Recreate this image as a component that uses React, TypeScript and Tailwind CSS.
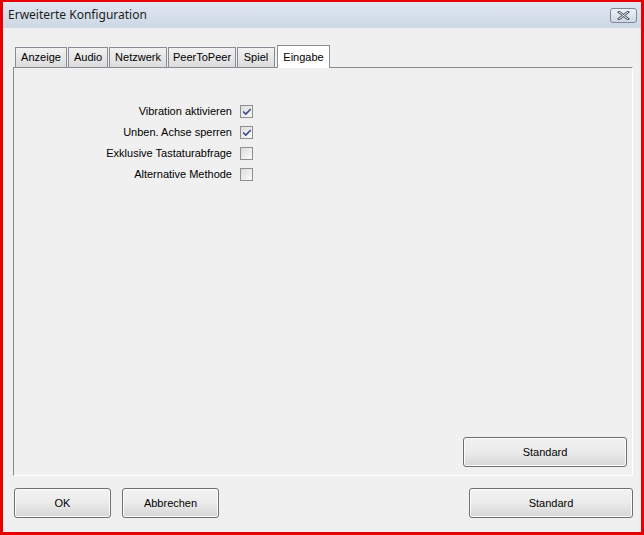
import { Check } from 'lucide-react';

const tabs = [
  { name: 'Anzeige', w: 'w-[52px]' },
  { name: 'Audio', w: 'w-[40px]' },
  { name: 'Netzwerk', w: 'w-[58px]' },
  { name: 'PeerToPeer', w: 'w-[68px]' },
  { name: 'Spiel', w: 'w-[38px]' },
  { name: 'Eingabe', w: 'w-[53px]' },
];

const options = [
  { label: 'Vibration aktivieren', checked: true },
  { label: 'Unben. Achse sperren', checked: true },
  { label: 'Exklusive Tastaturabfrage', checked: false },
  { label: 'Alternative Methode', checked: false },
];

function WinButton({ label, className }: { label: string; className: string }) {
  return (
    <button
      className={`h-[30px] rounded-[3px] border border-[#707070] bg-gradient-to-b from-[#f2f2f2] via-[#ebebeb] to-[#d6d6d6] text-[11px] text-black shadow-[inset_0_0_0_1px_#fcfcfc] ${className}`}
    >
      {label}
    </button>
  );
}

function Checkbox({ checked }: { checked: boolean }) {
  return (
    <div className="flex h-[13px] w-[13px] items-center justify-center border border-[#8e8f8f] bg-gradient-to-br from-[#dcdcdc] to-[#fbfbfb]">
      {checked && <Check className="h-[10px] w-[10px] text-[#3d4f8a]" strokeWidth={4} />}
    </div>
  );
}

export default function App() {
  return (
    <div
      className="h-[535px] w-[644px] overflow-hidden border-x-[3px] border-b-[3px] border-t-2 border-[#e60000] bg-[#f0f0f0]"
      style={{ fontFamily: '"Liberation Sans", Arial, sans-serif' }}
    >
      <div className="flex h-[26px] items-center justify-between bg-gradient-to-b from-[#dfe7f0] to-[#cdd8e5] pl-[5px] pr-[4px]">
        <span className="text-[12px] text-[#1e1e1e]" style={{ fontFamily: '"Noto Sans", sans-serif' }}>
          Erweiterte Konfiguration
        </span>
        <div className="flex h-[15px] w-[27px] items-center justify-center rounded-[3px] border border-[#7c8797] bg-gradient-to-b from-[#eef2f6] to-[#cfd7e1]">
          <svg width="13" height="9" viewBox="0 0 13 9">
            <path d="M2 1 L11 8 M11 1 L2 8" stroke="#4b5565" strokeWidth="2.6" strokeLinecap="square" fill="none" />
            <path d="M2 1 L11 8 M11 1 L2 8" stroke="#f4f6f8" strokeWidth="1" fill="none" />
          </svg>
        </div>
      </div>

      <div className="pl-[10px] pr-[8px] pt-[17px]">
        <div className="flex items-end pl-[2px]">
          {tabs.map((t, i) => {
            const active = t.name === 'Eingabe';
            return (
              <div
                key={t.name}
                className={
                  active
                    ? `relative z-10 -mb-px ml-[2px] flex h-[23px] justify-center border border-b-0 border-[#898c95] bg-white pt-[3px] text-[11px] ${t.w}`
                    : `flex h-[20px] items-center justify-center border border-b-0 border-[#898c95] bg-gradient-to-b from-[#f2f2f2] to-[#dcdcdc] text-[11px] ${i === 0 ? '' : 'ml-[1px]'} ${t.w}`
                }
              >
                {t.name}
              </div>
            );
          })}
        </div>
        <div className="flex h-[409px] w-[620px] flex-col border border-[#898c95] border-b-white border-r-white">
          <div className="flex flex-col gap-[8px] pt-[37px]">
            {options.map((o) => (
              <div key={o.label} className="flex h-[13px] items-center">
                <span className="w-[226px] pr-[8px] text-right text-[11px] text-black">{o.label}</span>
                <Checkbox checked={o.checked} />
              </div>
            ))}
          </div>
          <div className="mt-auto flex justify-end pb-[8px] pr-[5px]">
            <WinButton label="Standard" className="w-[164px]" />
          </div>
        </div>

        <div className="mt-[12px] flex items-center">
          <WinButton label="OK" className="ml-[1px] w-[97px]" />
          <WinButton label="Abbrechen" className="ml-[11px] w-[97px]" />
          <WinButton label="Standard" className="ml-auto w-[164px]" />
        </div>
      </div>
    </div>
  );
}
